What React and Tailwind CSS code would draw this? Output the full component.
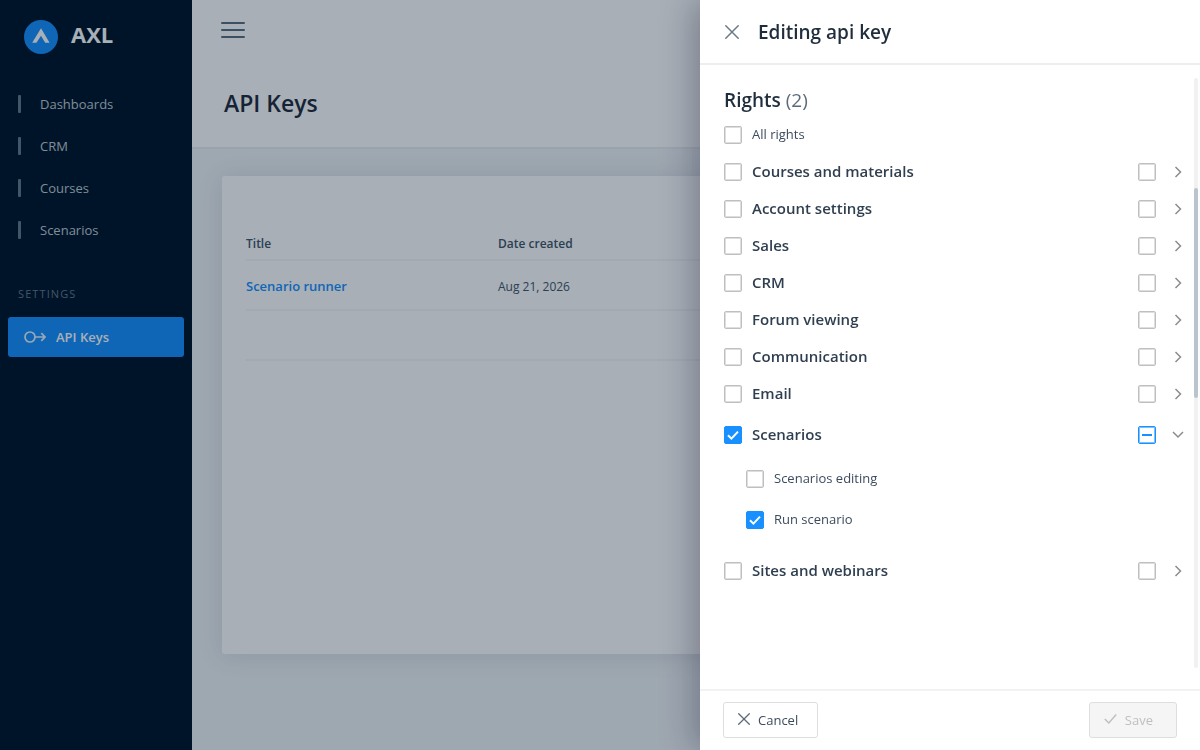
import React, { useState } from 'react';

const navItems = ['Dashboards', 'CRM', 'Courses', 'Scenarios'];

const apiKeys = [{ id: 1, title: 'Scenario runner', created: 'Aug 21, 2026' }];

const rightGroups = [
  { id: 'courses', label: 'Courses and materials' },
  { id: 'account', label: 'Account settings' },
  { id: 'sales', label: 'Sales' },
  { id: 'crm', label: 'CRM' },
  { id: 'forum', label: 'Forum viewing' },
  { id: 'communication', label: 'Communication' },
  { id: 'email', label: 'Email' },
  {
    id: 'scenarios',
    label: 'Scenarios',
    children: [
      { id: 'scenarios.edit', label: 'Scenarios editing' },
      { id: 'scenarios.run', label: 'Run scenario' },
    ],
  },
  { id: 'sites', label: 'Sites and webinars' },
];

const CloseIcon = ({ className }) => (
  <svg className={className} viewBox="0 0 14 14" fill="none" stroke="currentColor" strokeWidth="1.5" strokeLinecap="round">
    <path d="M0.8 0.8 13.2 13.2M13.2 0.8 0.8 13.2" />
  </svg>
);

function Checkbox({ indeterminate = false, ...props }) {
  return (
    <span className="grid size-[18px] shrink-0">
      <input
        type="checkbox"
        ref={(el) => {
          if (el) el.indeterminate = indeterminate;
        }}
        className="peer col-start-1 row-start-1 size-[18px] appearance-none rounded-[2px] border border-[#bfbfbf] bg-white shadow-[inset_0_0_0_1px_#dedede] checked:border-[#1890ff] checked:bg-[#1890ff] checked:shadow-none indeterminate:border-[#1890ff] indeterminate:shadow-[inset_0_0_0_1px_#7cc0ff]"
        {...props}
      />
      <svg
        viewBox="0 0 18 18"
        fill="none"
        stroke="white"
        strokeWidth="2"
        className="pointer-events-none invisible col-start-1 row-start-1 size-[18px] peer-checked:visible"
      >
        <path d="M4 9.3 7.4 12.6 14 5.6" />
      </svg>
      <svg
        viewBox="0 0 18 18"
        className="pointer-events-none invisible col-start-1 row-start-1 size-[18px] peer-indeterminate:visible"
      >
        <path d="M4 8h10v2H4z" fill="#1890ff" />
      </svg>
    </span>
  );
}

function Sidebar() {
  return (
    <aside className="w-48 shrink-0 bg-[#001529]">
      <a href="#" className="flex items-center gap-[13px] px-6 pt-5 text-white">
        <svg viewBox="0 0 34 34" className="size-[34px]">
          <circle cx="17" cy="17" r="17" fill="#1890ff" />
          <path d="M17 8.3 25.6 22.7H21.2L17 15.8 12.4 22.7H8.2Z" fill="white" />
        </svg>
        <span className="pb-[6px] text-[22px] leading-7 font-bold">AXL</span>
      </a>
      <nav className="pt-[29px]">
        <ul>
          {navItems.map((item) => (
            <li key={item}>
              <a href="#" className="flex h-[42px] items-center gap-[19px] pl-[18px] text-[13px] text-[#c2cad2]">
                <span className="h-[18px] w-[3px] rounded-[1px] bg-[#65778a]" />
                <span className="pt-px">{item}</span>
              </a>
            </li>
          ))}
        </ul>
        <p className="mt-[35px] px-[18px] text-[11px] leading-4 tracking-widest text-[#65778a]">SETTINGS</p>
        <a
          href="#"
          className="mx-2 mt-[15px] flex h-10 items-center gap-[10px] rounded-[3px] bg-[#1890ff] px-4 text-[13px] font-semibold text-white"
        >
          <svg viewBox="0 0 22 12" fill="none" stroke="currentColor" strokeWidth="1.7" className="h-3 w-[22px] opacity-90">
            <circle cx="6" cy="6" r="5" />
            <path d="M11 6h10M17.3 2.2 21 6l-3.7 3.8" />
          </svg>
          <span className="pt-px">API Keys</span>
        </a>
      </nav>
    </aside>
  );
}

function KeysPage() {
  return (
    <div className="flex min-w-0 grow flex-col bg-[#f0f4f7]">
      <header className="border-b-2 border-[#eaedf0] bg-white">
        <div className="flex h-[60px] items-center pl-[29px]">
          <button type="button" aria-label="Toggle menu" className="text-[#5c7083]">
            <svg viewBox="0 0 24 16" stroke="currentColor" strokeWidth="2" strokeLinecap="round" className="h-4 w-6">
              <path d="M1 1h22M1 8h22M1 15h22" />
            </svg>
          </button>
        </div>
        <h1 className="px-8 pt-6 pb-6 text-[23px] leading-[39px] font-semibold text-[#1f2d3d]">API Keys</h1>
      </header>
      <main className="mx-[30px] mt-[27px] mb-24 grow rounded-[3px] bg-white px-6 pt-[52px] shadow-[0_2px_24px_rgba(60,70,95,0.14)]">
        <table className="w-full table-fixed text-left text-[#43566a]">
          <thead>
            <tr className="h-8 border-b-2 border-[#f4f6f8] text-[12px]">
              <th className="w-[252px] pt-px font-semibold">Title</th>
              <th className="pt-px font-semibold">Date created</th>
            </tr>
          </thead>
          <tbody className="text-[12px]">
            {apiKeys.map((key) => (
              <tr key={key.id} className="h-[50px] border-b-2 border-[#f4f6f8]">
                <td className="pt-1">
                  <a href="#" className="text-[13px] font-semibold text-[#1890ff]">
                    {key.title}
                  </a>
                </td>
                <td className="pt-1">{key.created}</td>
              </tr>
            ))}
            <tr className="h-[50px] border-b-2 border-[#f4f6f8]">
              <td colSpan={2} />
            </tr>
          </tbody>
        </table>
      </main>
    </div>
  );
}

function RightGroup({ group, checked, toggle }) {
  const [open, setOpen] = useState(Boolean(group.children));
  const children = group.children || [];
  const picked = children.filter((child) => checked[child.id]).length;
  const partial = picked > 0 && picked < children.length;

  return (
    <li className={children.length && open ? 'pt-1 pb-3' : ''}>
      <div className="flex h-[37px] items-center">
        <label className="flex grow items-center gap-[10px] text-[15px] font-semibold text-[#2f3f50]">
          <Checkbox checked={Boolean(checked[group.id])} onChange={() => toggle(group.id)} />
          {group.label}
        </label>
        <Checkbox
          aria-label={`Select all in ${group.label}`}
          indeterminate={partial}
          checked={Boolean(checked[`${group.id}.all`])}
          onChange={() => toggle(`${group.id}.all`)}
        />
        <button
          type="button"
          aria-label={`Expand ${group.label}`}
          aria-expanded={open}
          onClick={() => setOpen(!open)}
          className="ml-4 text-[#8c8c8c]"
        >
          <svg viewBox="0 0 12 12" fill="none" stroke="currentColor" strokeWidth="1.5" className="size-3">
            {open ? <path d="M1 3 6 8 11 3" /> : <path d="M3.5 1 8.5 6 3.5 11" />}
          </svg>
        </button>
      </div>
      {open && children.length > 0 && (
        <ul className="pt-[5px] pl-[22px]">
          {children.map((child) => (
            <li key={child.id}>
              <label className="flex h-[41px] items-center gap-[10px] text-[13px] text-[#3c4c5e]">
                <Checkbox checked={Boolean(checked[child.id])} onChange={() => toggle(child.id)} />
                <span className="pt-px">{child.label}</span>
              </label>
            </li>
          ))}
        </ul>
      )}
    </li>
  );
}

function EditDrawer() {
  const [checked, setChecked] = useState({ scenarios: true, 'scenarios.run': true });
  const toggle = (id) => setChecked((prev) => ({ ...prev, [id]: !prev[id] }));
  const total = Object.values(checked).filter(Boolean).length;

  return (
    <section
      role="dialog"
      aria-labelledby="drawer-title"
      className="flex h-full w-[500px] max-w-full flex-col bg-white shadow-[-6px_0_32px_rgba(20,20,50,0.32)]"
    >
      <header className="flex h-[65px] shrink-0 items-center gap-[19px] border-b-2 border-[#eeeeee] pl-[25px]">
        <button type="button" aria-label="Close" className="text-[#6b7a89]">
          <CloseIcon className="size-[14px]" />
        </button>
        <h2 id="drawer-title" className="pt-px text-[19px] leading-7 font-semibold text-[#1f2d3d]">
          Editing api key
        </h2>
      </header>

      <div className="flex min-h-0 grow pt-[13px] pr-[2px] pb-[21px]">
        <div className="min-w-0 grow overflow-hidden pr-[10px] pl-6">
          <h3 className="pt-2 text-[19px] leading-7 font-semibold text-[#1f2d3d]">
            Rights <span className="font-normal text-[#5c6b7a]">(2)</span>
          </h3>
          <label className="mt-[2px] flex h-[37px] items-center gap-[10px] text-[13px] text-[#3c4c5e]">
            <Checkbox checked={Boolean(checked.all)} onChange={() => toggle('all')} />
            <span className="pt-px">All rights</span>
          </label>
          <ul>
            {rightGroups.map((group) => (
              <RightGroup key={group.id} group={group} checked={checked} toggle={toggle} />
            ))}
          </ul>
        </div>
        {/* Scroll track */}
        <div className="w-1 shrink-0 rounded-full bg-[#f1f1f1] pt-[110px]">
          <div className="h-[210px] rounded-full bg-[#b9c4cd]" />
        </div>
      </div>

      <footer className="flex shrink-0 items-center justify-between border-t-2 border-[#f2f2f2] pt-[11px] pr-[23px] pb-3 pl-[23px]">
        <button
          type="button"
          className="flex h-9 items-center gap-2 rounded-[3px] border border-[#dedede] pr-[19px] pl-[14px] text-[13px] text-[#3c4c5e]"
        >
          <CloseIcon className="mb-[3px] size-3 text-[#5c6b7a]" />
          <span className="pt-px">Cancel</span>
        </button>
        <button
          type="button"
          disabled={total > 0}
          className="flex h-9 items-center gap-2 rounded-[3px] border border-[#dedede] bg-[#f5f5f5] pr-[23px] pl-[14px] text-[13px] text-[#bfbfbf]"
        >
          <svg viewBox="0 0 13 12" fill="none" stroke="currentColor" strokeWidth="1.5" className="mb-[3px] h-3 w-[13px]">
            <path d="M0.8 6 4.8 10 12.2 1.6" />
          </svg>
          <span className="pt-px">Save</span>
        </button>
      </footer>
    </section>
  );
}

export default function App() {
  return (
    <div className="flex min-h-screen font-['Open_Sans','Noto_Sans',sans-serif]">
      <Sidebar />
      <KeysPage />
      <div className="fixed inset-0 flex justify-end bg-[#001529]/34">
        <EditDrawer />
      </div>
    </div>
  );
}
